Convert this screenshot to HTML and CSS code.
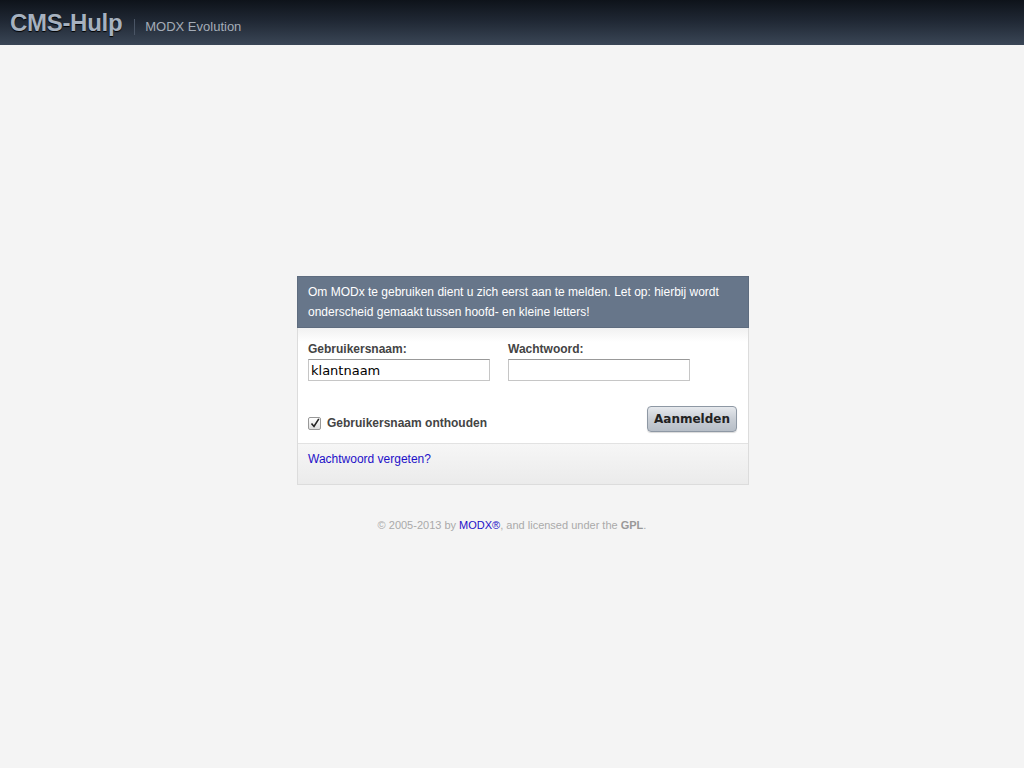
FILE: index.html
```html
<!DOCTYPE html>
<html lang="nl">
<head>
    <meta charset="UTF-8">
    <title>MODX Evolution - CMS-Hulp</title>
    <link rel="stylesheet" href="styles.css">
</head>
<body>
    <!-- Top bar -->
    <div class="topbar">
        <span class="site-name">CMS-Hulp</span>
        <span class="site-sub">MODX Evolution</span>
    </div>

    <!-- Login box -->
    <div class="login">
        <div class="login-intro">
            Om MODx te gebruiken dient u zich eerst aan te melden. Let op: hierbij wordt onderscheid gemaakt tussen hoofd- en kleine letters!
        </div>
        <form class="login-form">
            <div class="fields">
                <div class="field">
                    <label for="username">Gebruikersnaam:</label>
                    <input type="text" id="username" value="klantnaam">
                </div>
                <div class="field">
                    <label for="password">Wachtwoord:</label>
                    <input type="password" id="password">
                </div>
            </div>
            <div class="actions">
                <label class="remember">
                    <span class="check">
                        <svg width="10" height="10" viewBox="0 0 10 10"><path d="M1.5 5.5 L4 8.5 L8.8 0.8" fill="none" stroke="#222" stroke-width="1.6"/></svg>
                    </span>
                    Gebruikersnaam onthouden
                </label>
                <button type="button" class="login-btn">Aanmelden</button>
            </div>
        </form>
        <div class="login-foot">
            <a href="#">Wachtwoord vergeten?</a>
        </div>
    </div>

    <p class="copyright">&copy; 2005-2013 by <a href="#">MODX&reg;</a>, and licensed under the <strong>GPL</strong>.</p>
</body>
</html>
```

FILE: styles.css
```css
/* Page */
html {
    font-family: "Liberation Sans", Arial, sans-serif;
}

body {
    margin: 0;
    padding: 0;
    background-color: #f4f4f4;
    color: #444;
}

/* Top bar */
.topbar {
    height: 45px;
    display: flex;
    align-items: center;
    padding-left: 10px;
    background: linear-gradient(to bottom, #0e131a 0%, #1f2733 45%, #3a4656 100%);
    box-sizing: border-box;
}

.site-name {
    font-size: 24px;
    font-weight: bold;
    color: #a6b1bf;
    letter-spacing: -0.3px;
    text-shadow: 0 1px 1px #000;
    padding-right: 12px;
}

.site-sub {
    font-size: 13px;
    color: #a4acb7;
    border-left: 1px solid #4a5565;
    padding-left: 10px;
    margin-top: 8px;
    line-height: 16px;
}

/* Login box */
.login {
    width: 450px;
    margin: 231px 0 0 calc(50% - 215px);
    border: 1px solid #dcdcdc;
    background-color: #fff;
}

.login-intro {
    background-color: #67768a;
    color: #fff;
    font-size: 12px;
    line-height: 20px;
    padding: 5px 10px 5px;
    margin: -1px -1px 0;
    border: 1px solid #5e6c7f;
}

.login-form {
    margin: 0;
    padding: 14px 10px 10px;
    background: linear-gradient(to bottom, #f1f1f1 0px, #fff 14px);
}

.fields {
    display: flex;
    gap: 18px;
}

.field label {
    display: block;
    font-size: 12px;
    font-weight: bold;
    color: #444;
    margin-bottom: 3px;
}

.field input {
    width: 182px;
    height: 22px;
    box-sizing: border-box;
    border: 1px solid #c6c6c6;
    border-top-color: #999;
    padding: 1px 2px;
    font-family: "DejaVu Sans", sans-serif;
    font-size: 13px;
    color: #000;
}

.actions {
    display: flex;
    justify-content: space-between;
    align-items: flex-end;
    margin-top: 25px;
}

.remember {
    display: flex;
    align-items: center;
    gap: 6px;
    font-size: 12px;
    font-weight: bold;
    color: #444;
    margin-bottom: 3px;
}

.check {
    width: 11px;
    height: 11px;
    border: 1px solid #999;
    border-radius: 2px;
    background: linear-gradient(to bottom, #fff, #ddd);
    display: flex;
    align-items: center;
    justify-content: center;
}

.login-btn {
    width: 90px;
    height: 26px;
    font-family: "DejaVu Sans", sans-serif;
    font-size: 12px;
    font-weight: bold;
    color: #222;
    border: 1px solid #8e98a4;
    border-radius: 4px;
    background: linear-gradient(to bottom, #e6e9ed 0%, #c9ced5 50%, #b7bec7 100%);
    box-shadow: 0 1px 1px rgba(0, 0, 0, 0.15);
    cursor: pointer;
    margin-right: 1px;
    margin-bottom: 1px;
}

.login-foot {
    border-top: 1px solid #e2e2e2;
    height: 41px;
    padding: 8px 10px 0;
    box-sizing: border-box;
    background: linear-gradient(to bottom, #f6f6f6, #ebebeb);
    font-size: 12px;
}

.login-foot a {
    color: #1e10c8;
    text-decoration: none;
}

.copyright {
    text-align: center;
    font-size: 11px;
    color: #aaa;
    margin-top: 34px;
}

.copyright a {
    color: #1e10c8;
    text-decoration: none;
}

.copyright strong {
    color: #999;
}
```
